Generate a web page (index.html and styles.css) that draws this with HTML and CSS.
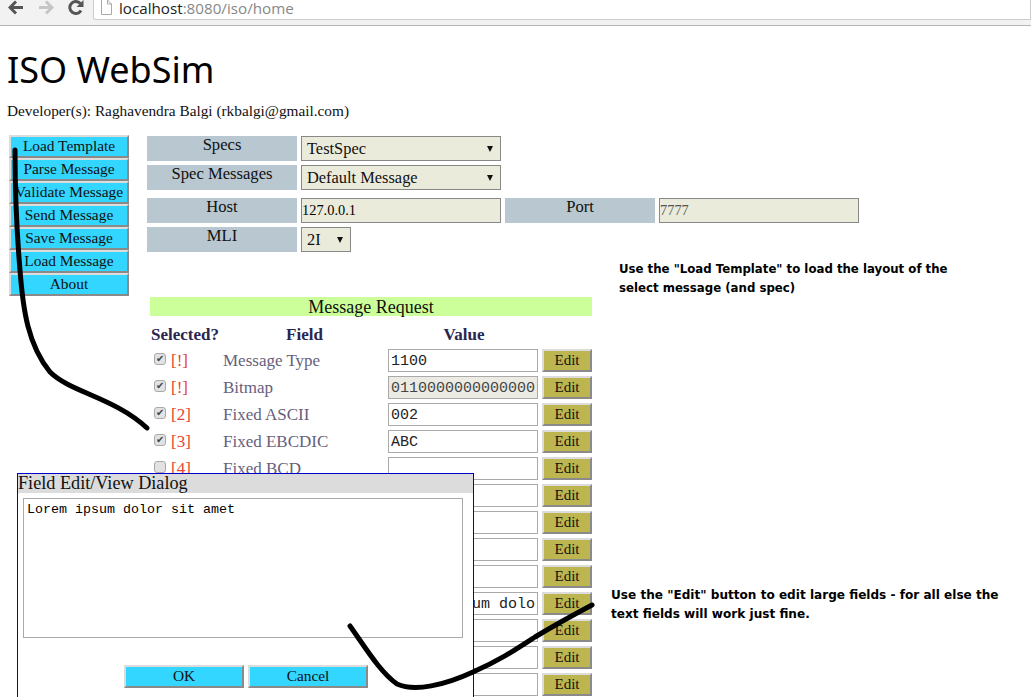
FILE: index.html
```html
<!DOCTYPE html>
<html lang="en">
<head>
    <meta charset="UTF-8">
    <title>ISO WebSim</title>
    <link rel="stylesheet" href="styles.css">
</head>
<body>
    <div class="toolbar">
        <svg class="tool-icon" width="16" height="15" viewBox="0 0 16 15"><path d="M15 7.500H3M8 1.500L2 7.500L8 13.500" fill="none" stroke="#555" stroke-width="3"/></svg>
        <svg class="tool-icon" width="16" height="15" viewBox="0 0 16 15"><path d="M1 7.500H13M8 1.500L14 7.500L8 13.500" fill="none" stroke="#c6c6c6" stroke-width="3"/></svg>
        <svg class="tool-icon" width="16" height="15" viewBox="0 0 16 15"><path d="M13 10.500A6 6 0 1 1 12.300 3.500" fill="none" stroke="#555" stroke-width="3"/><path d="M15.500 0V7H8.500Z" fill="#555"/></svg>
        <div class="address">
            <svg width="11" height="15" viewBox="0 0 11 15"><path d="M0.500 0V14.500H10.500V4L6.500 0" fill="#fff" stroke="#aaa"/><path d="M6.500 0V4H10.500" fill="none" stroke="#aaa"/></svg>
            <span class="url">localhost<span class="url-path">:8080/iso/home</span></span>
        </div>
    </div>

    <h1>ISO WebSim</h1>
    <p class="developer">Developer(s): Raghavendra Balgi (rkbalgi@gmail.com)</p>

    <div class="main">
        <div class="sidebar">
            <button class="nav-btn">Load Template</button>
            <button class="nav-btn">Parse Message</button>
            <button class="nav-btn">Validate Message</button>
            <button class="nav-btn">Send Message</button>
            <button class="nav-btn">Save Message</button>
            <button class="nav-btn">Load Message</button>
            <button class="nav-btn">About</button>
        </div>

        <div class="content">
            <div class="form-row">
                <div class="form-label">Specs</div>
                <div class="fake-select wide">TestSpec<span class="caret"></span></div>
            </div>
            <div class="form-row">
                <div class="form-label">Spec Messages</div>
                <div class="fake-select wide">Default Message<span class="caret"></span></div>
            </div>
            <div class="form-row spaced">
                <div class="form-label">Host</div>
                <input class="form-input" type="text" value="127.0.0.1">
                <div class="form-label">Port</div>
                <input class="form-input port" type="text" value="7777">
            </div>
            <div class="form-row">
                <div class="form-label">MLI</div>
                <div class="fake-select narrow">2I<span class="caret"></span></div>
            </div>

            <div class="request">
                <div class="request-title">Message Request</div>
                <div class="field-head">
                    <div>Selected?</div>
                    <div class="center head-field">Field</div>
                    <div class="center">Value</div>
                </div>

                <div class="field-row">
                    <div class="sel"><input type="checkbox" checked><span class="mark">[!]</span></div>
                    <div class="field-name">Message Type</div>
                    <input class="value" type="text" value="1100">
                    <button class="edit-btn">Edit</button>
                </div>
                <div class="field-row">
                    <div class="sel"><input type="checkbox" checked><span class="mark">[!]</span></div>
                    <div class="field-name">Bitmap</div>
                    <input class="value" type="text" value="01100000000000000000" disabled>
                    <button class="edit-btn">Edit</button>
                </div>
                <div class="field-row">
                    <div class="sel"><input type="checkbox" checked><span class="mark">[2]</span></div>
                    <div class="field-name">Fixed ASCII</div>
                    <input class="value" type="text" value="002">
                    <button class="edit-btn">Edit</button>
                </div>
                <div class="field-row">
                    <div class="sel"><input type="checkbox" checked><span class="mark">[3]</span></div>
                    <div class="field-name">Fixed EBCDIC</div>
                    <input class="value" type="text" value="ABC">
                    <button class="edit-btn">Edit</button>
                </div>
                <div class="field-row">
                    <div class="sel"><input type="checkbox"><span class="mark">[4]</span></div>
                    <div class="field-name">Fixed BCD</div>
                    <input class="value" type="text">
                    <button class="edit-btn">Edit</button>
                </div>
                <div class="field-row"><div></div><div></div><input class="value" type="text"><button class="edit-btn">Edit</button></div>
                <div class="field-row"><div></div><div></div><input class="value" type="text"><button class="edit-btn">Edit</button></div>
                <div class="field-row"><div></div><div></div><input class="value" type="text"><button class="edit-btn">Edit</button></div>
                <div class="field-row"><div></div><div></div><input class="value" type="text"><button class="edit-btn">Edit</button></div>
                <div class="field-row"><div></div><div></div><input class="value" type="text" value="Lorem ipsum dolor sit amet"><button class="edit-btn">Edit</button></div>
                <div class="field-row"><div></div><div></div><input class="value" type="text"><button class="edit-btn">Edit</button></div>
                <div class="field-row"><div></div><div></div><input class="value" type="text"><button class="edit-btn">Edit</button></div>
                <div class="field-row"><div></div><div></div><input class="value" type="text"><button class="edit-btn">Edit</button></div>
            </div>
        </div>
    </div>

    <p class="note note-template">Use the "Load Template" to load the layout of the<br>select message (and spec)</p>
    <p class="note note-edit">Use the "Edit" button to edit large fields - for all else the<br>text fields will work just fine.</p>

    <div class="dialog">
        <div class="dialog-title">Field Edit/View Dialog</div>
        <textarea class="dialog-text">Lorem ipsum dolor sit amet</textarea>
        <div class="dialog-buttons">
            <button class="nav-btn">OK</button>
            <button class="nav-btn">Cancel</button>
        </div>
    </div>

    <svg class="ink" width="1031" height="697" viewBox="0 0 1031 697">
        <path d="M15 150C15 190 17 235 20 270C23 310 28 345 50 372C70 392 115 398 147 428"/>
        <path d="M350 626C365 647 380 672 397 684C415 692 445 685 473 672C500 660 515 650 535 637C555 625 575 614 592 605"/>
    </svg>
</body>
</html>
```

FILE: styles.css
```css
html, body {
    margin: 0;
    height: 697px;
    overflow: hidden;
}
body {
    position: relative;
    background: white;
    font-family: 'Liberation Serif', serif;
    color: #111;
}

/* browser bar */
.toolbar {
    display: flex;
    align-items: flex-start;
    height: 25px;
    background: #f2f2f2;
    border-bottom: 1px solid #b5b5b5;
    padding-left: 8px;
}
.tool-icon {
    margin-right: 14px;
}
.address {
    display: flex;
    align-items: flex-start;
    gap: 7px;
    flex: 1;
    height: 19px;
    margin-left: -5px;
    padding-left: 7px;
    background: white;
    border: 1px solid #ccc;
    border-top: none;
    border-radius: 0 0 0 3px;
}
.url {
    font-family: 'Open Sans', sans-serif;
    font-size: 15.200px;
    line-height: 17px;
    color: #222;
}
.url-path {
    color: #888;
}

h1 {
    margin: 22px 0 0 7px;
    font-family: 'Noto Sans', sans-serif;
    font-size: 36px;
    font-weight: 400;
    line-height: 44px;
    color: #000;
}
.developer {
    margin: 9px 0 0 7px;
    font-size: 15.300px;
    line-height: 20px;
}

.main {
    display: flex;
    gap: 18px;
    margin: 14px 0 0 9px;
}
.sidebar {
    display: flex;
    flex-direction: column;
    width: 120px;
}
.nav-btn {
    width: 120px;
    height: 23px;
    padding: 0 0 2px;
    overflow: hidden;
    white-space: nowrap;
    background: #33d6ff;
    border: 2px solid;
    border-color: #dcdcdc #8a8a8a #8a8a8a #dcdcdc;
    font-family: 'Liberation Serif', serif;
    font-size: 15.400px;
    color: #111;
}

.content {
    width: 720px;
    padding-top: 1px;
}
.form-row {
    display: flex;
    gap: 4px;
    margin-bottom: 4px;
}
.form-row.spaced {
    margin-top: 8px;
}
.form-label {
    width: 150px;
    height: 25px;
    background: #b8c7d0;
    text-align: center;
    font-size: 16.600px;
    line-height: 18px;
}
.fake-select, .form-input {
    box-sizing: border-box;
    height: 25px;
    background: #ebebdc;
    border: 1px solid #888;
    font-family: 'Liberation Serif', serif;
}
.fake-select {
    display: flex;
    align-items: center;
    justify-content: space-between;
    padding: 0 7px 0 5px;
    font-size: 16.400px;
}
.fake-select.wide {
    width: 200px;
}
.fake-select.narrow {
    width: 50px;
}
.caret {
    width: 0;
    height: 0;
    border-left: 3px solid transparent;
    border-right: 3px solid transparent;
    border-top: 6px solid #111;
}
.form-input {
    width: 200px;
    padding: 0;
    font-size: 14.400px;
}
.form-input.port {
    color: #555;
}

.request {
    width: 442px;
    margin: 45px 0 0 3px;
}
.request-title {
    height: 19px;
    background: #ccff99;
    text-align: center;
    font-size: 18px;
    line-height: 21px;
}
.field-head {
    display: grid;
    grid-template-columns: 73px 165px 150px 54px;
    height: 33px;
    padding: 5px 0 0 1px;
    box-sizing: border-box;
    align-items: center;
    font-size: 17px;
    font-weight: 700;
    color: #2a2550;
}
.head-field {
    padding-right: 4px;
}
.center {
    text-align: center;
}
.field-row {
    display: grid;
    grid-template-columns: 73px 165px 150px 50px;
    height: 23px;
    margin-bottom: 4px;
    align-items: center;
}
.sel {
    display: flex;
    align-items: center;
    gap: 5px;
    padding-left: 4px;
}
.sel input {
    appearance: none;
    box-sizing: border-box;
    width: 12px;
    height: 12px;
    margin: 0 0 4px 0;
    background: #e2e2e2;
    border: 1px solid #aaa;
    border-radius: 3px;
    font-size: 10px;
    line-height: 10px;
    text-align: center;
    color: #444;
}
.sel input:checked::before {
    content: "\2714";
}
.mark {
    font-size: 17px;
    color: #e8452c;
}
.field-name {
    font-size: 17px;
    color: #66607c;
}
.value {
    box-sizing: border-box;
    width: 150px;
    height: 23px;
    padding: 2px 2px 0;
    background: white;
    border: 1px solid #aaa;
    font-family: 'Liberation Mono', monospace;
    font-size: 15px;
    color: #222;
}
.value:disabled {
    background: #ebebe4;
    color: #444;
}
.edit-btn {
    width: 50px;
    height: 23px;
    margin-left: 4px;
    padding: 0;
    background: #bdb650;
    border: 2px solid;
    border-color: #dcdcdc #8a8a8a #8a8a8a #dcdcdc;
    font-family: 'Liberation Serif', serif;
    font-size: 15px;
    color: #111;
}

/* annotations on the screenshot */
.note {
    position: absolute;
    margin: 0;
    font-family: 'DejaVu Sans', sans-serif;
    font-weight: 700;
    line-height: 19px;
    color: #000;
}
.note-template {
    left: 619px;
    top: 260px;
    font-size: 11.750px;
}
.note-edit {
    left: 611px;
    top: 586px;
    font-size: 12.080px;
}

.dialog {
    position: absolute;
    left: 17px;
    top: 473px;
    width: 455px;
    height: 240px;
    background: white;
    border: 1px solid #0000cc;
}
.dialog-title {
    height: 19px;
    background: #dcdcdc;
    font-size: 18.200px;
    line-height: 19px;
}
.dialog-text {
    display: block;
    box-sizing: border-box;
    width: 440px;
    height: 140px;
    margin: 5px 0 0 5px;
    padding: 3px 3px;
    border: 1px solid #aaa;
    resize: none;
    font-family: 'Liberation Mono', monospace;
    font-size: 13.330px;
}
.dialog-buttons {
    display: flex;
    justify-content: center;
    gap: 4px;
    margin: 27px 0 0 1px;
}

.ink {
    position: absolute;
    left: 0;
    top: 0;
    pointer-events: none;
}
.ink path {
    fill: none;
    stroke: #000;
    stroke-width: 5;
    stroke-linecap: round;
}
```
